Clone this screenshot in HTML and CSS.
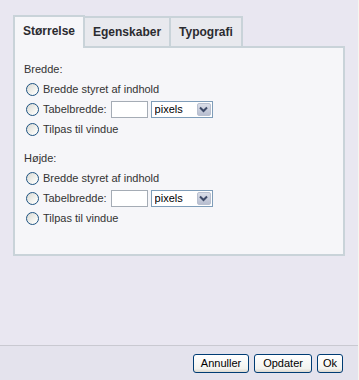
FILE: index.html
```html
<!DOCTYPE html>
<html lang="da">
<head>
    <meta charset="UTF-8">
    <meta name="viewport" content="width=device-width, initial-scale=1.0">
    <link rel="stylesheet" href="styles.css">
    <title>Tabelegenskaber</title>
</head>
<body>

    <div class="dialog">
        <div class="main">
            <div class="tabs">
                <div class="tab active">Størrelse</div>
                <div class="tab">Egenskaber</div>
                <div class="tab">Typografi</div>
            </div>

            <div class="panel">
                <div class="group">
                    <div class="row caption">Bredde:</div>
                    <label class="row"><input type="radio" name="width"> Bredde styret af indhold</label>
                    <label class="row"><input type="radio" name="width"> Tabelbredde:
                        <input type="text" class="size">
                        <span class="select">
                            <select><option>pixels</option><option>procent</option></select>
                            <span class="arrow">
                                <svg width="9" height="7" viewBox="0 0 9 7"><path d="M1 1.5 L4.5 5 L8 1.5" fill="none" stroke="#3d4a68" stroke-width="2"/></svg>
                            </span>
                        </span>
                    </label>
                    <label class="row"><input type="radio" name="width"> Tilpas til vindue</label>
                </div>

                <div class="group">
                    <div class="row caption">Højde:</div>
                    <label class="row"><input type="radio" name="height"> Bredde styret af indhold</label>
                    <label class="row"><input type="radio" name="height"> Tabelbredde:
                        <input type="text" class="size">
                        <span class="select">
                            <select><option>pixels</option><option>procent</option></select>
                            <span class="arrow">
                                <svg width="9" height="7" viewBox="0 0 9 7"><path d="M1 1.5 L4.5 5 L8 1.5" fill="none" stroke="#3d4a68" stroke-width="2"/></svg>
                            </span>
                        </span>
                    </label>
                    <label class="row"><input type="radio" name="height"> Tilpas til vindue</label>
                </div>
            </div>
        </div>

        <div class="footer">
            <button class="btn">Annuller</button>
            <button class="btn wide">Opdater</button>
            <button class="btn small">Ok</button>
        </div>
    </div>

</body>
</html>
```

FILE: styles.css
```css
body {
    margin: 0;
    font-family: "Liberation Sans", Arial, sans-serif;
    font-size: 11px;
    color: #333;
    background-color: #e9e7f1;
}

.dialog {
    display: flex;
    flex-direction: column;
    height: 100vh;
    border-right: 1px solid #f6f6ee;
    box-sizing: border-box;
}

.main {
    flex: 1;
    padding: 15px 13px 0 13px;
}

/* tabs */
.tabs {
    display: flex;
    align-items: flex-end;
    position: relative;
    z-index: 1;
    margin-bottom: -2px;
}

.tab {
    height: 28px;
    line-height: 28px;
    padding: 0 8px;
    margin: 0 -2px 2px 0;
    border: 2px solid #c9d3d9;
    border-bottom: none;
    background-color: #e8e9ee;
    font-size: 12px;
    font-weight: bold;
    color: #2b2b30;
}

.tab.active {
    height: 31px;
    margin-bottom: 0;
    background-color: #f6f6f9;
    position: relative;
    z-index: 2;
}

/* panel */
.panel {
    height: 195px;
    border: 2px solid #c9d3d9;
    background-color: #f6f6f9;
    padding: 11px 9px 0 9px;
}

.group + .group {
    margin-top: 9px;
}

.row {
    display: flex;
    align-items: center;
    height: 20px;
}

input[type="radio"] {
    appearance: none;
    width: 13px;
    height: 13px;
    margin: 0 4px 0 2px;
    border: 1px solid #1d5281;
    border-radius: 50%;
    background: linear-gradient(135deg, #d8d8d2, #f7f7f4 70%, #fff);
    box-sizing: border-box;
}

.size {
    width: 37px;
    height: 17px;
    margin: 0 3px 0 4px;
    padding: 0 2px;
    border: 1px solid #a5acb5;
    background: #fff;
    box-sizing: border-box;
}

.select {
    position: relative;
    display: inline-block;
    width: 62px;
    height: 17px;
}

.select select {
    appearance: none;
    width: 100%;
    height: 100%;
    margin: 0;
    padding: 0 0 0 3px;
    border: 1px solid #7f9db9;
    border-radius: 0;
    background: #fff;
    font-family: "Liberation Sans", Arial, sans-serif;
    font-size: 11px;
    color: #000;
}

.arrow {
    position: absolute;
    top: 2px;
    right: 2px;
    width: 14px;
    height: 13px;
    display: flex;
    align-items: center;
    justify-content: center;
    border: 1px solid #b9c0d0;
    border-radius: 2px;
    background: linear-gradient(#d9dde8, #b8bed0);
    box-sizing: border-box;
}

/* footer */
.footer {
    display: flex;
    justify-content: flex-end;
    align-items: center;
    gap: 5px;
    height: 34px;
    padding-right: 15px;
    border-top: 1px solid #c9c9d1;
    background-color: #e4e3ed;
}

.btn {
    height: 19px;
    padding: 0 7px;
    border: 1px solid #003c74;
    border-radius: 3px;
    background: linear-gradient(#ffffff, #f3f3ef 80%, #dcd8cf);
    font-family: "Liberation Sans", Arial, sans-serif;
    font-size: 11px;
    color: #000;
}

.btn.wide {
    padding: 0 8px;
}

.btn.small {
    padding: 0 5px;
}
```
